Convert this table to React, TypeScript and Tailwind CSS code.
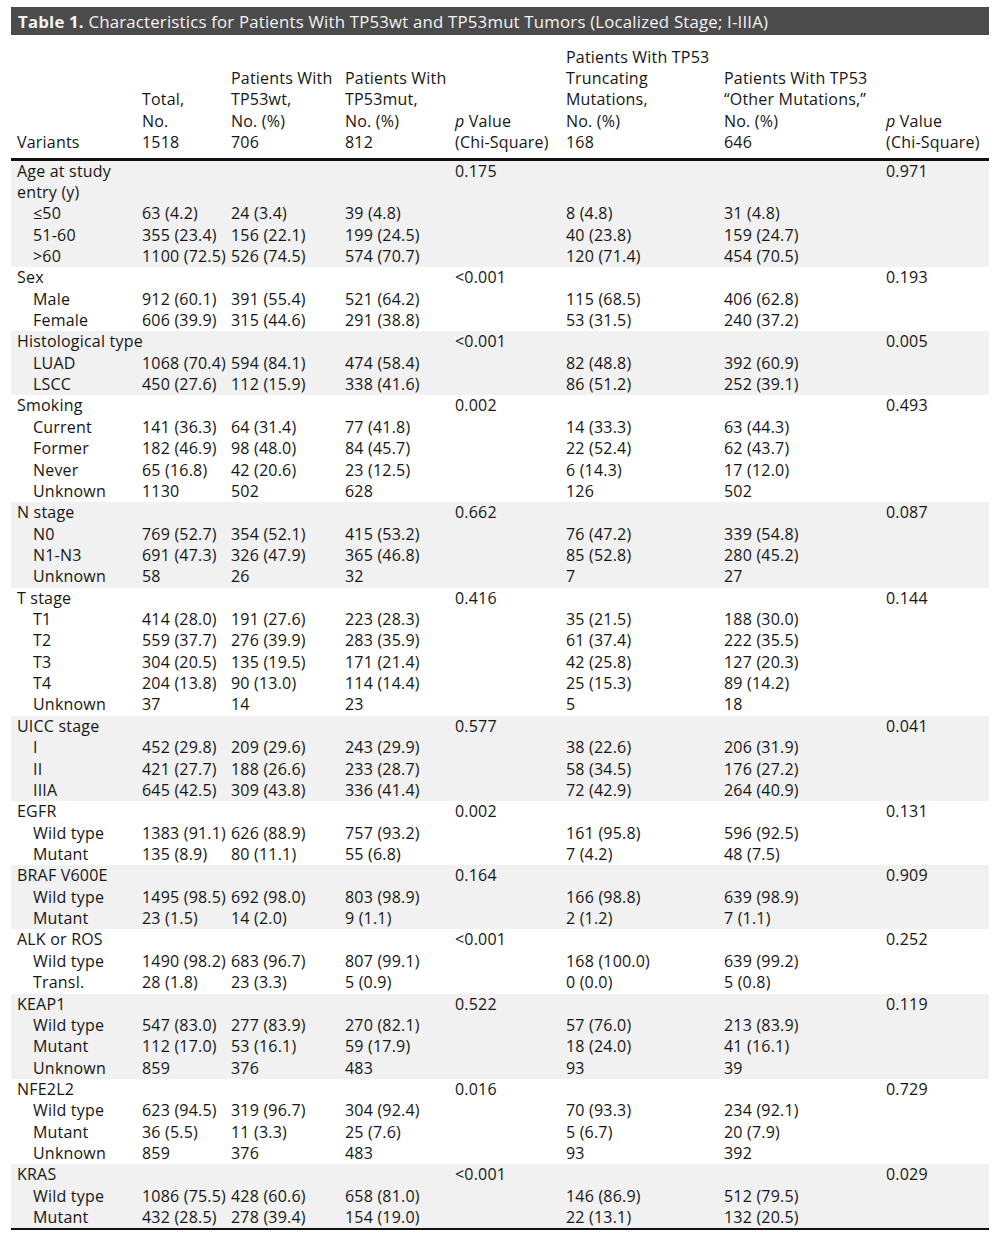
import * as React from "react"

// ─── Table data ──────────────────────────────────────────────────────
type Sub = [string, string, string, string, string, string]
type Group = { title: string[]; p1: string; p2: string; rows: Sub[] }

const groups: Group[] = [
  {
    title: ["Age at study", "entry (y)"],
    p1: "0.175",
    p2: "0.971",
    rows: [
      ["≤50", "63 (4.2)", "24 (3.4)", "39 (4.8)", "8 (4.8)", "31 (4.8)"],
      ["51-60", "355 (23.4)", "156 (22.1)", "199 (24.5)", "40 (23.8)", "159 (24.7)"],
      [">60", "1100 (72.5)", "526 (74.5)", "574 (70.7)", "120 (71.4)", "454 (70.5)"],
    ],
  },
  {
    title: ["Sex"],
    p1: "<0.001",
    p2: "0.193",
    rows: [
      ["Male", "912 (60.1)", "391 (55.4)", "521 (64.2)", "115 (68.5)", "406 (62.8)"],
      ["Female", "606 (39.9)", "315 (44.6)", "291 (38.8)", "53 (31.5)", "240 (37.2)"],
    ],
  },
  {
    title: ["Histological type"],
    p1: "<0.001",
    p2: "0.005",
    rows: [
      ["LUAD", "1068 (70.4)", "594 (84.1)", "474 (58.4)", "82 (48.8)", "392 (60.9)"],
      ["LSCC", "450 (27.6)", "112 (15.9)", "338 (41.6)", "86 (51.2)", "252 (39.1)"],
    ],
  },
  {
    title: ["Smoking"],
    p1: "0.002",
    p2: "0.493",
    rows: [
      ["Current", "141 (36.3)", "64 (31.4)", "77 (41.8)", "14 (33.3)", "63 (44.3)"],
      ["Former", "182 (46.9)", "98 (48.0)", "84 (45.7)", "22 (52.4)", "62 (43.7)"],
      ["Never", "65 (16.8)", "42 (20.6)", "23 (12.5)", "6 (14.3)", "17 (12.0)"],
      ["Unknown", "1130", "502", "628", "126", "502"],
    ],
  },
  {
    title: ["N stage"],
    p1: "0.662",
    p2: "0.087",
    rows: [
      ["N0", "769 (52.7)", "354 (52.1)", "415 (53.2)", "76 (47.2)", "339 (54.8)"],
      ["N1-N3", "691 (47.3)", "326 (47.9)", "365 (46.8)", "85 (52.8)", "280 (45.2)"],
      ["Unknown", "58", "26", "32", "7", "27"],
    ],
  },
  {
    title: ["T stage"],
    p1: "0.416",
    p2: "0.144",
    rows: [
      ["T1", "414 (28.0)", "191 (27.6)", "223 (28.3)", "35 (21.5)", "188 (30.0)"],
      ["T2", "559 (37.7)", "276 (39.9)", "283 (35.9)", "61 (37.4)", "222 (35.5)"],
      ["T3", "304 (20.5)", "135 (19.5)", "171 (21.4)", "42 (25.8)", "127 (20.3)"],
      ["T4", "204 (13.8)", "90 (13.0)", "114 (14.4)", "25 (15.3)", "89 (14.2)"],
      ["Unknown", "37", "14", "23", "5", "18"],
    ],
  },
  {
    title: ["UICC stage"],
    p1: "0.577",
    p2: "0.041",
    rows: [
      ["I", "452 (29.8)", "209 (29.6)", "243 (29.9)", "38 (22.6)", "206 (31.9)"],
      ["II", "421 (27.7)", "188 (26.6)", "233 (28.7)", "58 (34.5)", "176 (27.2)"],
      ["IIIA", "645 (42.5)", "309 (43.8)", "336 (41.4)", "72 (42.9)", "264 (40.9)"],
    ],
  },
  {
    title: ["EGFR"],
    p1: "0.002",
    p2: "0.131",
    rows: [
      ["Wild type", "1383 (91.1)", "626 (88.9)", "757 (93.2)", "161 (95.8)", "596 (92.5)"],
      ["Mutant", "135 (8.9)", "80 (11.1)", "55 (6.8)", "7 (4.2)", "48 (7.5)"],
    ],
  },
  {
    title: ["BRAF V600E"],
    p1: "0.164",
    p2: "0.909",
    rows: [
      ["Wild type", "1495 (98.5)", "692 (98.0)", "803 (98.9)", "166 (98.8)", "639 (98.9)"],
      ["Mutant", "23 (1.5)", "14 (2.0)", "9 (1.1)", "2 (1.2)", "7 (1.1)"],
    ],
  },
  {
    title: ["ALK or ROS"],
    p1: "<0.001",
    p2: "0.252",
    rows: [
      ["Wild type", "1490 (98.2)", "683 (96.7)", "807 (99.1)", "168 (100.0)", "639 (99.2)"],
      ["Transl.", "28 (1.8)", "23 (3.3)", "5 (0.9)", "0 (0.0)", "5 (0.8)"],
    ],
  },
  {
    title: ["KEAP1"],
    p1: "0.522",
    p2: "0.119",
    rows: [
      ["Wild type", "547 (83.0)", "277 (83.9)", "270 (82.1)", "57 (76.0)", "213 (83.9)"],
      ["Mutant", "112 (17.0)", "53 (16.1)", "59 (17.9)", "18 (24.0)", "41 (16.1)"],
      ["Unknown", "859", "376", "483", "93", "39"],
    ],
  },
  {
    title: ["NFE2L2"],
    p1: "0.016",
    p2: "0.729",
    rows: [
      ["Wild type", "623 (94.5)", "319 (96.7)", "304 (92.4)", "70 (93.3)", "234 (92.1)"],
      ["Mutant", "36 (5.5)", "11 (3.3)", "25 (7.6)", "5 (6.7)", "20 (7.9)"],
      ["Unknown", "859", "376", "483", "93", "392"],
    ],
  },
  {
    title: ["KRAS"],
    p1: "<0.001",
    p2: "0.029",
    rows: [
      ["Wild type", "1086 (75.5)", "428 (60.6)", "658 (81.0)", "146 (86.9)", "512 (79.5)"],
      ["Mutant", "432 (28.5)", "278 (39.4)", "154 (19.0)", "22 (13.1)", "132 (20.5)"],
    ],
  },
]

const td = "h-[21.36px] p-0 px-[6px] align-middle whitespace-nowrap"
const th = "px-[6px] pb-[4px] text-left align-bottom font-normal whitespace-nowrap"

function PValue() {
  return (
    <>
      <i>p</i> Value
      <br />
      (Chi-Square)
    </>
  )
}

// ─── Main page ───────────────────────────────────────────────────────
export default function App() {
  return (
    <div className="min-h-[1236px] w-[1001px] bg-white pt-[7px] pl-[11px] font-['Open_Sans',sans-serif] text-[16px] leading-[21.36px] tracking-[0.2px] text-[#161616]">
      <div className="w-[978px]">
        {/* Caption bar */}
        <div className="flex h-[28px] items-center bg-[#4b4b4b] px-[7px] pt-[1px] text-[16.8px] text-[#f4f4f4]">
          <span className="font-bold">Table 1.</span>
          <span>&nbsp;Characteristics for Patients With TP53wt and TP53mut Tumors (Localized Stage; I-IIIA)</span>
        </div>

        <table className="w-[978px] table-fixed border-collapse">
          <colgroup>
            <col className="w-[125px]" />
            <col className="w-[89px]" />
            <col className="w-[114px]" />
            <col className="w-[110px]" />
            <col className="w-[111px]" />
            <col className="w-[158px]" />
            <col className="w-[162px]" />
            <col className="w-[109px]" />
          </colgroup>
          <thead>
            <tr className="h-[124px] border-b-[3px] border-[#111]">
              <th className={th}>Variants</th>
              <th className={th}>
                Total,
                <br />
                No.
                <br />
                1518
              </th>
              <th className={th}>
                Patients With
                <br />
                TP53wt,
                <br />
                No. (%)
                <br />
                706
              </th>
              <th className={th}>
                Patients With
                <br />
                TP53mut,
                <br />
                No. (%)
                <br />
                812
              </th>
              <th className={th}>
                <PValue />
              </th>
              <th className={th}>
                Patients With TP53
                <br />
                Truncating
                <br />
                Mutations,
                <br />
                No. (%)
                <br />
                168
              </th>
              <th className={th}>
                Patients With TP53
                <br />
                “Other Mutations,”
                <br />
                No. (%)
                <br />
                646
              </th>
              <th className={th}>
                <PValue />
              </th>
            </tr>
          </thead>
          {groups.map((g, gi) => (
            <tbody key={gi} className={gi % 2 === 0 ? "bg-[#f1f1f1]" : "bg-white"}>
              {g.title.map((t, ti) => (
                <tr key={"t" + ti}>
                  <td className={td}>{t}</td>
                  <td className={td} />
                  <td className={td} />
                  <td className={td} />
                  <td className={td}>{ti === 0 ? g.p1 : ""}</td>
                  <td className={td} />
                  <td className={td} />
                  <td className={td}>{ti === 0 ? g.p2 : ""}</td>
                </tr>
              ))}
              {g.rows.map((r, ri) => (
                <tr key={ri}>
                  <td className={td + " pl-[22px]"}>{r[0]}</td>
                  <td className={td}>{r[1]}</td>
                  <td className={td}>{r[2]}</td>
                  <td className={td}>{r[3]}</td>
                  <td className={td} />
                  <td className={td}>{r[4]}</td>
                  <td className={td}>{r[5]}</td>
                  <td className={td} />
                </tr>
              ))}
            </tbody>
          ))}
          <tfoot>
            <tr className="border-t-[2px] border-[#111]">
              <td colSpan={8} className="h-0 p-0" />
            </tr>
          </tfoot>
        </table>
      </div>
    </div>
  )
}
